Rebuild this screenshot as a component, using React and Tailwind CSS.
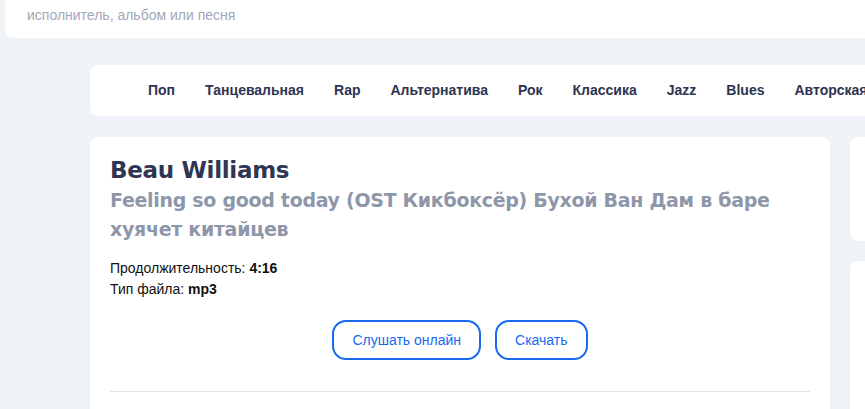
const genres = [
  "Поп",
  "Танцевальная",
  "Rap",
  "Альтернатива",
  "Рок",
  "Классика",
  "Jazz",
  "Blues",
  "Авторская",
];

const App = () => {
  return (
    <div className="min-h-[409px] w-full overflow-hidden bg-[#eff3f8] font-['Liberation_Sans',Arial,sans-serif]">
      {/* search */}
      <div className="ml-[5px] flex h-[38px] items-start rounded-bl-lg bg-white pl-[22px] pt-[5px]">
        <span className="text-[14px] leading-[20px] text-[#a3a7b8]">
          исполнитель, альбом или песня
        </span>
      </div>

      {/* genres */}
      <div className="ml-[90px] mt-[27px] flex h-[51px] items-center gap-[30px] whitespace-nowrap rounded-l-lg bg-white pl-[58px]">
        {genres.map((g) => (
          <a key={g} className="text-[14px] font-bold text-[#2d3452]">
            {g}
          </a>
        ))}
      </div>

      <div className="ml-[90px] mt-[21px] flex gap-[20px]">
        {/* track card */}
        <div className="w-[740px] shrink-0 rounded-t-lg bg-white px-[20px] pt-[18px]">
          <h1 className="font-['DejaVu_Sans',sans-serif] text-[23px] font-bold leading-[30px] tracking-[-0.3px] text-[#2f3653]">
            Beau Williams
          </h1>
          <h2 className="mt-[1px] font-['DejaVu_Sans',sans-serif] text-[19px] font-bold leading-[29px] tracking-[-0.3px] text-[#8e97aa]">
            Feeling so good today (OST Кикбоксёр) Бухой Ван Дам в баре хуячет
            китайцев
          </h2>
          <div className="mt-[14px] text-[14px] leading-[21px] text-[#111]">
            <p>
              Продолжительность: <b>4:16</b>
            </p>
            <p>
              Тип файла: <b>mp3</b>
            </p>
          </div>
          <div className="mt-[20px] flex justify-center gap-[14px]">
            <button className="h-[40px] rounded-[14px] border-2 border-[#1769f0] px-[18px] text-[14px] text-[#1769f0]">
              Слушать онлайн
            </button>
            <button className="h-[40px] rounded-[14px] border-2 border-[#1769f0] px-[18px] text-[14px] text-[#1769f0]">
              Скачать
            </button>
          </div>
          <div className="mt-[31px] h-px bg-[#e4e4e4]" />
          <div className="h-[20px]" />
        </div>

        {/* side column */}
        <div className="flex flex-1 flex-col gap-[20px]">
          <div className="h-[104px] rounded-l-lg bg-white" />
          <div className="h-[200px] rounded-l-lg bg-white" />
        </div>
      </div>
    </div>
  );
};

export default App;
